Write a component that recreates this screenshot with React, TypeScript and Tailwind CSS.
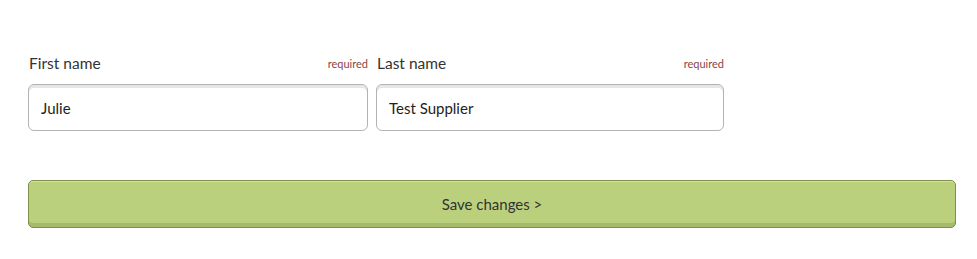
import React from 'react';

const font = { fontFamily: '"Source Sans Pro", Lato, "Liberation Sans", sans-serif' };

function Field({ label, value, width }: { label: string; value: string; width: string }) {
    return (
        <div className={`flex flex-col ${width}`}>
            <div className="flex items-end justify-between h-[20px]">
                <span className="text-[15.5px] leading-none text-[#333] pl-[1px]">{label}</span>
                <span className="text-[11px] leading-none text-[#8a4545] pb-[2px]">required</span>
            </div>
            <input
                defaultValue={value}
                className="mt-[13px] h-[47px] w-full rounded-[6px] border border-[#b3b3b3] bg-white px-[12px] pt-[1px] text-[15px] text-[#222] shadow-[inset_0_3px_0_#e6e6e6] outline-none"
                style={font}
            />
        </div>
    );
}

export default function App() {
    return (
        <div className="min-h-screen bg-white pt-[51px] pl-[28px]" style={font}>
            <div className="flex gap-[8px]">
                <Field label="First name" value="Julie" width="w-[340px]" />
                <Field label="Last name" value="Test Supplier" width="w-[348px]" />
            </div>
            <button
                className="mt-[49px] h-[48px] w-[928px] rounded-[5px] border border-[#7d8f4b] bg-[#bbd07d] text-[15px] text-[#333] shadow-[inset_0_-4px_0_#a5ba6a,inset_0_1px_0_#d3e2a3]"
                style={font}
            >
                Save changes &gt;
            </button>
        </div>
    );
}
